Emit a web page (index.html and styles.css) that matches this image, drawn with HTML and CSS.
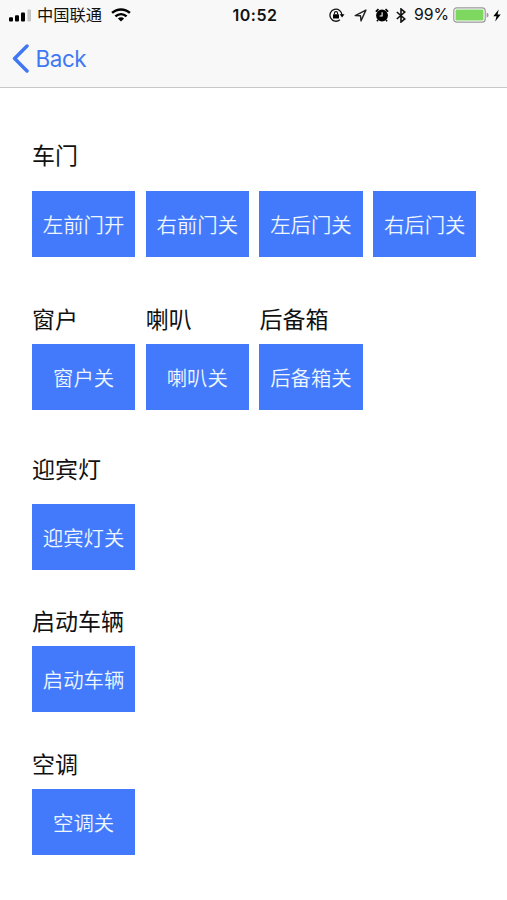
FILE: index.html
```
<!DOCTYPE html>
<html lang="zh-CN">
<head>
    <meta charset="UTF-8">
    <meta name="viewport" content="width=device-width, initial-scale=1.0">
    <title>车辆控制</title>
    <link rel="stylesheet" href="styles.css">
</head>
<body>

    <header class="header">
        <div class="status-bar">
            <div class="status-left">
                <svg class="signal" width="22" height="13" viewBox="0 0 22 13">
                    <rect x="0" y="8.2" width="4" height="4.4" rx="1"/>
                    <rect x="6" y="6.2" width="4" height="6.4" rx="1"/>
                    <rect x="12" y="3.4" width="4" height="9.2" rx="1"/>
                    <rect x="18.4" y="0.4" width="3.6" height="12.2" rx="1" fill="#c4c4c4"/>
                </svg>
                <span class="carrier">中国联通</span>
                <svg class="wifi" width="20" height="14" viewBox="0 0 20 14">
                    <g fill="none" stroke="#000" stroke-width="2.5">
                        <path d="M1.1 4.9C6.2 0.2 13.8 0.2 18.9 4.9"/>
                        <path d="M4.4 8.4C7.7 5.4 12.3 5.4 15.6 8.4"/>
                    </g>
                    <path d="M10 13.4L6.9 10.4C8.7 8.9 11.3 8.9 13.1 10.4Z"/>
                </svg>
            </div>
            <span class="time">10:52</span>
            <div class="status-right">
                <svg class="lock" width="16" height="14" viewBox="0 0 16 14">
                    <path d="M10.9 11.8A6 6 0 1 1 13 7" fill="none" stroke="#111" stroke-width="1.3"/>
                    <path d="M10.7 6.3H15.5L13.1 9.5Z"/>
                    <rect x="4" y="6.2" width="6" height="4.2" rx="0.5"/>
                    <path d="M5.4 6.5V5.2a1.6 1.6 0 0 1 3.2 0V6.5" fill="none" stroke="#111" stroke-width="1.1"/>
                </svg>
                <svg class="location" width="13" height="13" viewBox="0 0 13 13">
                    <path d="M1.2 6.6L11.9 1.1L7 11.9L6.5 6.7Z" fill="none" stroke="#222" stroke-width="1.4" stroke-linejoin="round"/>
                </svg>
                <svg class="alarm" width="14" height="14" viewBox="0 0 14 14">
                    <circle cx="7" cy="7.5" r="5.9"/>
                    <path d="M0.8 3.6L3.5 1.2M13.2 3.6L10.5 1.2M3 12L1.9 13.2M11 12L12.1 13.2" stroke="#000" stroke-width="1.6" fill="none"/>
                    <path d="M7.1 4.2V8H4.6" stroke="#fff" stroke-width="1.1" fill="none"/>
                </svg>
                <svg class="bluetooth" width="10" height="15" viewBox="0 0 10 15">
                    <path d="M0.8 4L8.8 10.9L5 14V1L8.8 4.1L0.8 11" fill="none" stroke="#111" stroke-width="1.6"/>
                </svg>
                <span class="percent">99%</span>
                <svg class="battery" width="36" height="16" viewBox="0 0 36 16">
                    <rect x="0.8" y="0.8" width="31.4" height="14.4" rx="3" fill="#fff" stroke="#999" stroke-width="1.2"/>
                    <rect x="2.5" y="2.5" width="28" height="11" rx="1.2" fill="#7ed860"/>
                    <path d="M33.6 5.5Q35.6 6 35.6 8T33.6 10.5Z" fill="#999"/>
                </svg>
                <svg class="bolt" width="8" height="13" viewBox="0 0 8 13">
                    <path d="M5.7 0.4L0.3 7.2H3.5L2.2 12.5L7.7 5.4H4.5Z"/>
                </svg>
            </div>
        </div>
        <a class="back">
            <svg width="17" height="29" viewBox="0 0 17 29">
                <path d="M15 2L2.6 14.5L15 27" fill="none" stroke="#4078f4" stroke-width="3.5" stroke-linecap="round" stroke-linejoin="round"/>
            </svg>
            <span>Back</span>
        </a>
    </header>

    <main class="controls">
        <section class="group doors">
            <h2>车门</h2>
            <div class="row">
                <button>左前门开</button>
                <button>右前门关</button>
                <button>左后门关</button>
                <button>右后门关</button>
            </div>
        </section>

        <div class="row body-parts">
            <section class="group">
                <h2>窗户</h2>
                <button>窗户关</button>
            </section>
            <section class="group">
                <h2>喇叭</h2>
                <button>喇叭关</button>
            </section>
            <section class="group">
                <h2>后备箱</h2>
                <button>后备箱关</button>
            </section>
        </div>

        <section class="group lights">
            <h2>迎宾灯</h2>
            <button>迎宾灯关</button>
        </section>

        <section class="group engine">
            <h2>启动车辆</h2>
            <button>启动车辆</button>
        </section>

        <section class="group air">
            <h2>空调</h2>
            <button>空调关</button>
        </section>
    </main>

</body>
</html>
```
FILE: styles.css
```
* {
    box-sizing: border-box;
}
body {
    margin: 0;
    background-color: #fff;
    color: #111;
    font-family: Inter, "Noto Sans CJK SC", sans-serif;
}
svg {
    display: block;
    flex: none;
}
.header {
    height: 88px;
    background-color: #f8f8f8;
    border-bottom: 1px solid #c8c8c8;
}
.status-bar {
    display: grid;
    grid-template-columns: 1fr auto 1fr;
    align-items: center;
    height: 30px;
    padding: 0 6px 0 9px;
    line-height: 30px;
}
.status-left,
.status-right {
    display: flex;
    align-items: center;
}
.status-right {
    justify-content: flex-end;
}
.carrier {
    margin-left: 6px;
    font-size: 16.3px;
}
.wifi {
    margin-left: 9px;
}
.time {
    font-size: 16px;
    font-weight: 600;
    letter-spacing: 0.5px;
}
.location {
    margin-left: 9px;
}
.alarm {
    margin-left: 8px;
}
.bluetooth {
    margin-left: 7px;
}
.percent {
    margin-left: 8px;
    font-size: 15.8px;
}
.battery {
    margin-left: 4px;
}
.bolt {
    margin-left: 4px;
}
.back {
    display: inline-flex;
    align-items: center;
    height: 56px;
    padding-left: 12px;
    gap: 6.5px;
    color: #4078f4;
    font-size: 22.4px;
    letter-spacing: -0.4px;
}
.controls {
    padding: 52px 30px 0 32px;
}
.row {
    display: flex;
    gap: 10.5px;
}
.group h2 {
    margin: 0 0 9.5px;
    height: 30.5px;
    font-size: 23px;
    font-weight: 400;
    line-height: 32px;
}
.group button {
    display: block;
    width: 103.2px;
    height: 66px;
    padding: 0;
    border: none;
    background-color: #437afb;
    color: #eef6ff;
    font-family: "Noto Sans CJK SC", sans-serif;
    font-size: 20.4px;
    font-weight: 350;
    line-height: 28px;
}
.doors h2 {
    margin-bottom: 20px;
}
.body-parts {
    margin-top: 47.5px;
}
.lights {
    margin-top: 44px;
}
.lights h2 {
    margin-bottom: 19.5px;
}
.engine {
    margin-top: 36px;
}
.air {
    margin-top: 37px;
}
```
